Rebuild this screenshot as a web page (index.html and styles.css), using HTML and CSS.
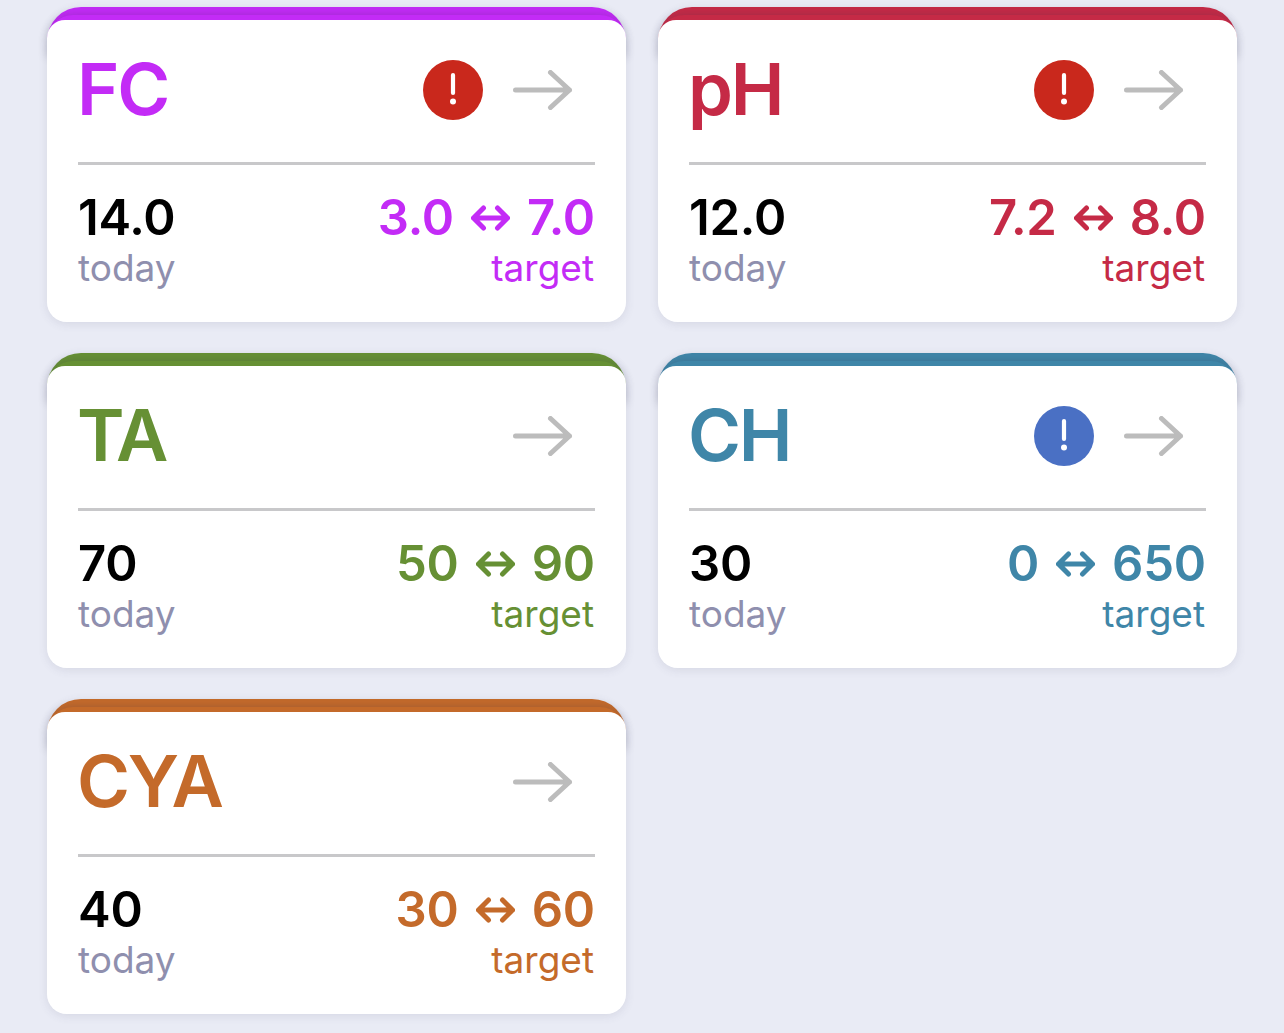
FILE: index.html
```html
<!DOCTYPE html>
<html lang="en">
<head>
<meta charset="utf-8">
<title>Pool chemistry</title>
<link rel="stylesheet" href="styles.css">
</head>
<body>
<svg class="defs" width="0" height="0" aria-hidden="true">
  <symbol id="arrow" viewBox="0 0 60 40"><path d="M2.5 20H56.5M37.5 2.5L56.5 20L37.5 37.5" fill="none" stroke="#bcbcbc" stroke-width="5" stroke-linecap="round" stroke-linejoin="round"/></symbol>
  <symbol id="alert" viewBox="0 0 60 60"><circle cx="30" cy="30" r="30" fill="currentColor"/><path d="M30 15V33" stroke="#fff" stroke-width="4.2" stroke-linecap="round"/><circle cx="30" cy="41.5" r="3" fill="#fff"/></symbol>
  <symbol id="swap" viewBox="0 0 39 26"><path d="M2.5 13H36.5M12.5 3L2.5 13L12.5 23M26.5 3L36.5 13L26.5 23" fill="none" stroke="currentColor" stroke-width="5" stroke-linecap="round" stroke-linejoin="round"/></symbol>
</svg>
<main class="grid">
  <article class="card fc">
    <div class="inner">
      <header class="head"><h2 class="name">FC</h2><svg class="alert danger"><use href="#alert"/></svg><svg class="arrow"><use href="#arrow"/></svg></header>
      <div class="stats">
        <div class="col"><span class="value">14.0</span><span class="label">today</span></div>
        <div class="col right"><span class="value tint">3.0<svg class="swap"><use href="#swap"/></svg>7.0</span><span class="label tint">target</span></div>
      </div>
    </div>
  </article>
  <article class="card ph">
    <div class="inner">
      <header class="head"><h2 class="name">pH</h2><svg class="alert danger"><use href="#alert"/></svg><svg class="arrow"><use href="#arrow"/></svg></header>
      <div class="stats">
        <div class="col"><span class="value">12.0</span><span class="label">today</span></div>
        <div class="col right"><span class="value tint">7.2<svg class="swap"><use href="#swap"/></svg>8.0</span><span class="label tint">target</span></div>
      </div>
    </div>
  </article>
  <article class="card ta">
    <div class="inner">
      <header class="head"><h2 class="name">TA</h2><svg class="arrow"><use href="#arrow"/></svg></header>
      <div class="stats">
        <div class="col"><span class="value">70</span><span class="label">today</span></div>
        <div class="col right"><span class="value tint">50<svg class="swap"><use href="#swap"/></svg>90</span><span class="label tint">target</span></div>
      </div>
    </div>
  </article>
  <article class="card ch">
    <div class="inner">
      <header class="head"><h2 class="name">CH</h2><svg class="alert info"><use href="#alert"/></svg><svg class="arrow"><use href="#arrow"/></svg></header>
      <div class="stats">
        <div class="col"><span class="value">30</span><span class="label">today</span></div>
        <div class="col right"><span class="value tint">0<svg class="swap"><use href="#swap"/></svg>650</span><span class="label tint">target</span></div>
      </div>
    </div>
  </article>
  <article class="card cya">
    <div class="inner">
      <header class="head"><h2 class="name">CYA</h2><svg class="arrow"><use href="#arrow"/></svg></header>
      <div class="stats">
        <div class="col"><span class="value">40</span><span class="label">today</span></div>
        <div class="col right"><span class="value tint">30<svg class="swap"><use href="#swap"/></svg>60</span><span class="label tint">target</span></div>
      </div>
    </div>
  </article>
</main>
</body>
</html>
```
FILE: styles.css
```css
* { box-sizing: border-box; }
html, body { margin: 0; height: 100%; }
body {
  background: #e9ebf5;
  font-family: Inter, "Liberation Sans", sans-serif;
  overflow: hidden;
}
.defs { position: absolute; }
.grid {
  display: grid;
  grid-template-columns: 579px 579px;
  grid-auto-rows: 314.5px;
  column-gap: 32px;
  row-gap: 31.5px;
  padding: 7px 47px 0;
}
.card {
  --tint: #000;
  position: relative;
  z-index: 0;
  background: linear-gradient(var(--tint) 0 40px, transparent 40px);
  border-radius: 34px 34px 20px 20px;
  padding-top: 13px;
  box-shadow: 0 2px 10px rgba(70, 75, 110, .12);
  color: var(--tint);
}
.card::before {
  content: "";
  position: absolute;
  z-index: -1;
  inset: 8px 0 auto;
  height: 42px;
  border-radius: 26px 26px 0 0;
  box-shadow: 0 0 8px rgba(50, 50, 80, .26);
}
.fc { --tint: #c32bf6; }
.ph { --tint: #c52a46; }
.ta { --tint: #669034; }
.ch { --tint: #3f86a8; }
.cya { --tint: #c46a2a; }
.inner {
  background: #fff;
  height: 100%;
  border-radius: 18px 18px 20px 20px;
  padding: 0 31px;
}
.head {
  display: flex;
  align-items: center;
  height: 145px;
  padding-bottom: 2px;
  border-bottom: 3px solid #c8c8ca;
}
.name {
  margin: 0 auto 0 0;
  font-size: 72px;
  font-weight: 600;
  letter-spacing: -2.2px;
  line-height: 1;
  position: relative;
  top: -1px;
  left: -1px;
}
.alert { width: 60px; height: 60px; flex: none; }
.danger { color: #c9281c; }
.info { color: #4a70c4; }
.arrow { width: 60px; height: 40px; flex: none; margin: 0 22px 0 30px; }
.stats {
  display: flex;
  justify-content: space-between;
  padding-top: 24px;
}
.col { display: flex; flex-direction: column; }
.right { align-items: flex-end; }
.value {
  display: flex;
  align-items: center;
  color: #000;
  font-size: 49px;
  font-weight: 600;
  line-height: 58px;
  letter-spacing: -.2px;
}
.label {
  color: #8f8fae;
  font-size: 37px;
  line-height: 46px;
  margin-top: -2px;
}
.right .label { margin-right: 1px; }
.value.tint, .label.tint { color: var(--tint); }
.swap { width: 39px; height: 26px; margin: 0 17px; flex: none; }
```
